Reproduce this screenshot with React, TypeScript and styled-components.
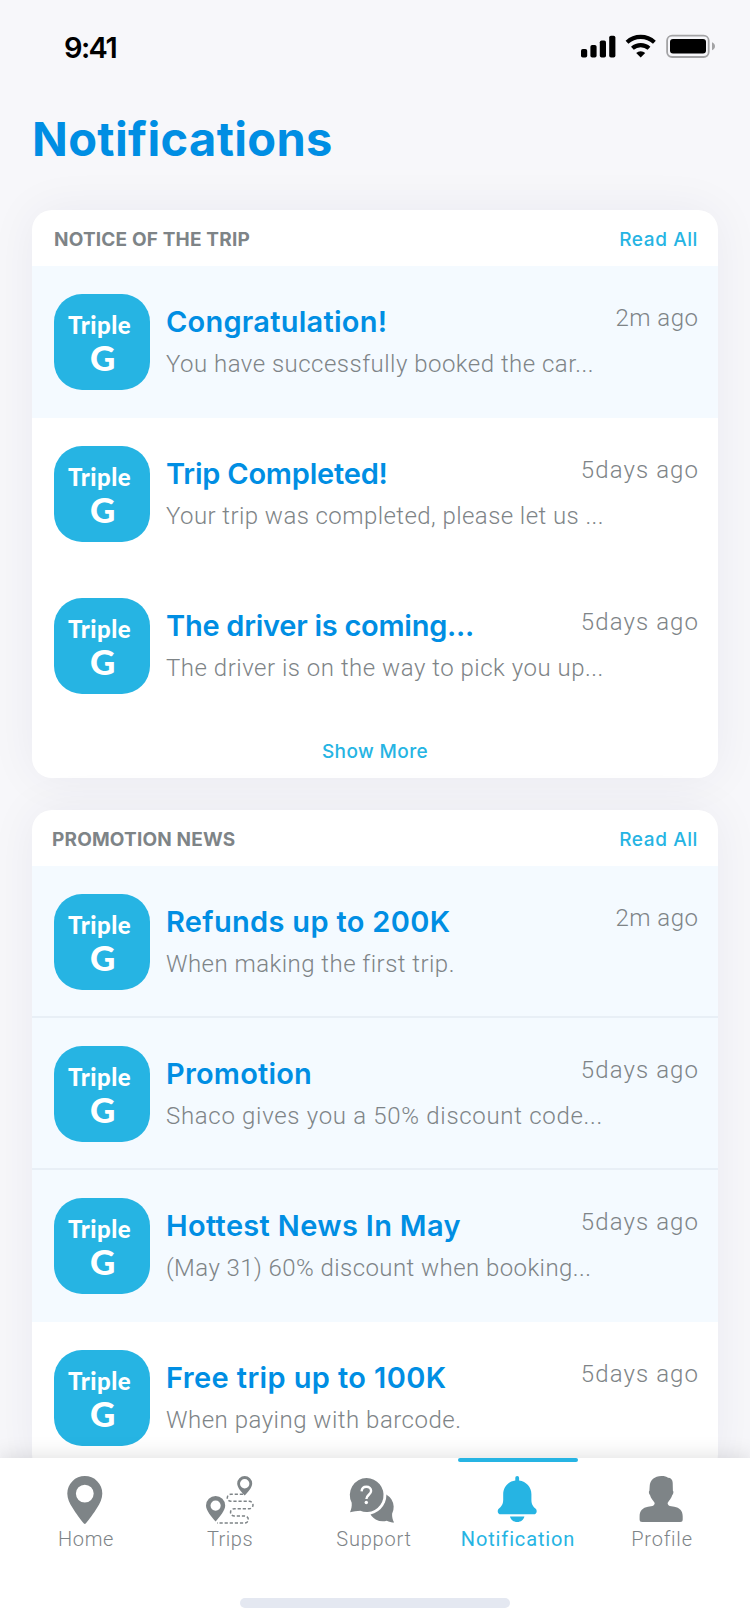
import React from "react";
import styled, { createGlobalStyle } from "styled-components";

const color = {
  page: "#f7f7fa",
  primary: "#008ee3",
  accent: "#26b4e3",
  grey: "#7e8487",
  unread: "#f4faff",
  line: "#e8eff6",
};

const GlobalStyle = createGlobalStyle`
  * { box-sizing: border-box; }
  body { margin: 0; background: ${color.page}; font-family: Inter, sans-serif; }
  h1, h2, h3, p { margin: 0; padding: 0; }
`;

const Screen = styled.div`
  width: 750px;
  height: 1624px;
  display: flex;
  flex-direction: column;
  overflow: hidden;
  background: ${color.page};
`;

const StatusBar = styled.header`
  flex: none;
  height: 94px;
  padding: 0 34px 0 64px;
  display: flex;
  align-items: center;
  justify-content: space-between;
`;

const Clock = styled.time`
  font-size: 29px;
  font-weight: 600;
  letter-spacing: -1.6px;
  line-height: 40px;
  padding-top: 1px;
  color: #000;
`;

const PageTitle = styled.h1`
  flex: none;
  height: 116px;
  padding: 13px 0 0 32px;
  font-size: 47px;
  line-height: 64px;
  font-weight: 700;
  letter-spacing: 0.35px;
  color: ${color.primary};
`;

const Feed = styled.main`
  flex: 1;
  min-height: 0;
  padding: 0 32px;
  display: flex;
  flex-direction: column;
  gap: 32px;
`;

const Card = styled.section`
  flex: none;
  border-radius: 20px;
  background: #fff;
  box-shadow: 0 0 48px rgba(40, 40, 90, 0.06);
`;

const CardHeader = styled.div<{ $inset: number }>`
  height: 56px;
  padding: 2px 20px 0 ${(p) => p.$inset}px;
  display: flex;
  align-items: center;
  justify-content: space-between;
`;

const CardTitle = styled.h2`
  font-size: 19px;
  font-weight: 700;
  letter-spacing: 0.18px;
  color: ${color.grey};
`;

const TextLink = styled.a<{ $strong?: boolean }>`
  font-size: 19px;
  font-weight: ${(p) => (p.$strong ? 550 : 450)};
  letter-spacing: ${(p) => (p.$strong ? 0.4 : 0.6)}px;
  color: ${color.accent};
`;

const CardFooter = styled.div`
  height: 56px;
  padding-top: 2px;
  display: flex;
  align-items: center;
  justify-content: center;
`;

const Row = styled.article<{ $unread?: boolean; $divided?: boolean }>`
  height: 152px;
  padding: 28px 20px 0 22px;
  display: flex;
  gap: 16px;
  background: ${(p) => (p.$unread ? color.unread : "transparent")};
  border-bottom: ${(p) => (p.$divided ? `2px solid ${color.line}` : "none")};
`;

const Logo = styled.div`
  flex: none;
  width: 96px;
  height: 96px;
  padding: 17px 0 0 14px;
  border-radius: 28px;
  background: ${color.accent};
  color: #fff;
  font-family: Lato, sans-serif;
  font-weight: 900;
`;

const LogoName = styled.div`
  font-size: 24px;
  line-height: 28px;
  letter-spacing: 0.5px;
`;

const LogoMark = styled.div`
  padding-left: 22px;
  font-size: 35px;
  line-height: 36px;
`;

const RowText = styled.div`
  flex: 1;
  min-width: 0;
  padding-top: 8px;
`;

const RowTitle = styled.h3<{ $track: number }>`
  font-size: 29px;
  line-height: 40px;
  font-weight: 600;
  letter-spacing: ${(p) => p.$track}px;
  white-space: nowrap;
  color: ${color.primary};
`;

const RowBody = styled.p<{ $track: number }>`
  margin-top: 7px;
  font-family: Roboto, sans-serif;
  font-size: 24px;
  line-height: 30px;
  font-weight: 340;
  letter-spacing: ${(p) => p.$track}px;
  white-space: nowrap;
  color: ${color.grey};
`;

const RowTime = styled.time<{ $track: number }>`
  flex: none;
  height: 30px;
  margin-top: 9px;
  margin-right: ${(p) => -p.$track}px;
  font-family: Roboto, sans-serif;
  font-size: 24px;
  line-height: 30px;
  font-weight: 340;
  letter-spacing: ${(p) => p.$track}px;
  color: ${color.grey};
`;

const TabBar = styled.nav`
  flex: none;
  position: relative;
  height: 166px;
  background: #fff;
  box-shadow: 0 -2px 20px rgba(0, 0, 0, 0.12);
`;

const Tabs = styled.div`
  height: 140px;
  padding: 0 16px 0 14px;
  display: grid;
  grid-template-columns: repeat(5, 144px);
`;

const Tab = styled.div<{ $active?: boolean }>`
  display: flex;
  flex-direction: column;
  align-items: center;
  color: ${(p) => (p.$active ? color.accent : color.grey)};

  &::before {
    content: "";
    width: 120px;
    height: 4px;
    margin-bottom: 14px;
    border-radius: 2px;
    background: ${(p) => (p.$active ? color.accent : "transparent")};
  }
`;

const TabLabel = styled.span<{ $active?: boolean; $track: number }>`
  margin-top: 3px;
  font-family: Roboto, sans-serif;
  font-size: 20px;
  line-height: 24px;
  font-weight: ${(p) => (p.$active ? 450 : 330)};
  letter-spacing: ${(p) => p.$track}px;
`;

const HomeIndicator = styled.div`
  width: 270px;
  height: 10px;
  margin: 0 auto;
  border-radius: 5px;
  background: #e4e8f1;
`;

const Icon = styled.svg`
  display: block;
  width: 48px;
  height: 48px;
  overflow: visible;
`;

const StatusIcons = () => (
  <svg width="136" height="26" viewBox="0 0 136 26">
    <rect x="1" y="15" width="6.2" height="8.6" rx="1.8" />
    <rect x="10.4" y="11" width="6.2" height="12.6" rx="1.8" />
    <rect x="19.8" y="6.4" width="6.2" height="17.2" rx="1.8" />
    <rect x="29.2" y="1.8" width="6.2" height="21.8" rx="1.8" />
    <g fill="none" stroke="#000" strokeWidth="4.2">
      <path d="M47 8.2a20.5 20.5 0 0 1 27.4 0" />
      <path d="M52.4 14.2a12.5 12.5 0 0 1 16.6 0" />
    </g>
    <path d="M60.7 23.6 56.2 19a6.5 6.5 0 0 1 9 0z" />
    <rect x="87.1" y="1.6" width="41.6" height="21.4" rx="5" fill="none" stroke="#a3a3a5" strokeWidth="1.8" />
    <rect x="90" y="5" width="36" height="14.6" rx="3" />
    <path d="M132 8.3c4 1.6 4 6.4 0 8z" fill="#a3a3a5" />
  </svg>
);

const PinIcon = () => (
  <Icon viewBox="1.6 0 48 48" fill="currentColor">
    <path
      fillRule="evenodd"
      d="M24.4 0a17.5 17.5 0 0 1 17.5 17.5c0 5.300-2.400 9.800-5.200 14.300C33.500 37 28.500 44 25.300 47.500q-.9.900-1.800 0C20.300 44 15.300 37 12.100 31.800 9.300 27.300 6.900 22.800 6.900 17.500A17.500 17.500 0 0 1 24.400 0zm0 8.700a8.900 8.900 0 1 0 0 17.800 8.900 8.900 0 0 0 0-17.800z"
    />
  </Icon>
);

const RouteIcon = () => (
  <Icon viewBox="0 0 48 48" fill="currentColor">
    <path
      fillRule="evenodd"
      d="M9.600 20a9.600 9.600 0 0 1 9.600 9.600c0 5-5.600 11.500-9.600 15.900C5.600 41.100 0 34.600 0 29.600A9.600 9.600 0 0 1 9.600 20zm0 4.500a5.100 5.100 0 1 0 0 10.200 5.100 5.100 0 0 0 0-10.200z"
    />
    <path
      fillRule="evenodd"
      d="M38.700 0a7.500 7.500 0 0 1 7.500 7.500c0 4-4.300 8.700-7.500 11.900-3.200-3.200-7.500-7.900-7.500-11.900A7.500 7.500 0 0 1 38.700 0zm0 3a4.700 4.700 0 1 0 0 9.400 4.700 4.700 0 0 0 0-9.400z"
    />
    <path
      d="M37 18.300H24.800a3.500 3.500 0 0 0 0 7h18.500a3.700 3.700 0 0 1 0 7.400H28.200a3.600 3.600 0 0 0 0 7.300h10.600a3.500 3.500 0 0 1 0 7H11"
      fill="none"
      stroke="currentColor"
      strokeWidth="1.5"
      strokeDasharray="3.2 1.9"
    />
  </Icon>
);

const SupportIcon = () => (
  <Icon viewBox="1.4 0 48 48" fill="currentColor">
    <path d="M30.500 16.600a14.600 14.600 0 0 1 13 21.200c-.2 3 .5 6 2 8.800-2.500 0-5-.6-7.300-1.800A14.600 14.600 0 1 1 30.500 16.600z" />
    <circle cx="18" cy="19" r="19.8" fill="#fff" />
    <path d="M18 2a17 17 0 1 1-6.300 32.800c-2.800.2-7.400.8-10.300 1.400 1.300-2.600 2-5.700 1.700-9.400A17 17 0 0 1 18 2z" />
    <path
      d="M13 15.300c.2-3 2.200-4.500 4.800-4.500 2.700 0 4.700 1.700 4.700 4.200 0 3.600-4.700 4-4.700 8"
      fill="none"
      stroke="#fff"
      strokeWidth="2.4"
    />
    <circle cx="17.7" cy="26.5" r="1.7" fill="#fff" />
  </Icon>
);

const BellIcon = () => (
  <Icon viewBox="0 0 48 48" fill="currentColor">
    <path d="M21.300 4.500V1.700q0-1.700 1.900-1.700t1.900 1.700v2.800c7.200 1 12.300 6.600 12.300 13.700v5.500c0 4.800 1.900 6.900 4.300 9.100 2 2 .8 5.500-2.200 5.500H6.900c-3 0-4.200-3.500-2.200-5.500 2.400-2.200 4.500-4.300 4.500-9.100v-5.500c0-7.100 4.900-12.700 12.100-13.700z" />
    <path d="M16 40.500h14.400c-.8 3.300-3.500 5.500-7.200 5.500s-6.400-2.200-7.200-5.500z" />
  </Icon>
);

const ProfileIcon = () => (
  <Icon viewBox="0.8 0 48 48" fill="currentColor">
    <path d="M24.300 0c3 0 5.200.6 6.500 1.800 3 0 4.600 2 4.700 5l.2 8c.9.500.6 3-.6 4.300-.9 3.400-3.100 5.300-4.700 7.900.1 1.500.7 2.500 2.200 2.900l4.500.8c5.200.9 8.400 4 8.400 9.500v3.300q0 2.500-2.500 2.500H4.900q-2.500 0-2.500-2.500v-3.300c0-5.500 3.200-8.600 8.400-9.500l4.500-.8c1.500-.4 2.100-1.400 2.200-2.900-1.600-2.600-4-4.500-4.700-7.900-1.200-1.300-1.500-3.800-.6-4.300l.3-4.800C12.800 4.300 17.300 0 24.300 0z" />
  </Icon>
);

type Notice = {
  title: string;
  titleTrack: number;
  body: string;
  bodyTrack: number;
  time: string;
  unread?: boolean;
  divided?: boolean;
};

const tripNotices: Notice[] = [
  { title: "Congratulation!", titleTrack: 0.24, body: "You have successfully booked the car...", bodyTrack: 0.48, time: "2m ago", unread: true },
  { title: "Trip Completed!", titleTrack: -0.21, body: "Your trip was completed, please let us ...", bodyTrack: 0.43, time: "5days ago" },
  { title: "The driver is coming...", titleTrack: -0.26, body: "The driver is on the way to pick you up...", bodyTrack: 0.51, time: "5days ago" },
];

const promotions: Notice[] = [
  { title: "Refunds up to 200K", titleTrack: 0.32, body: "When making the first trip.", bodyTrack: 0.46, time: "2m ago", unread: true, divided: true },
  { title: "Promotion", titleTrack: 0.2, body: "Shaco gives you a 50% discount code...", bodyTrack: 0.69, time: "5days ago", unread: true, divided: true },
  { title: "Hottest News In May", titleTrack: 0.33, body: "(May 31) 60% discount when booking...", bodyTrack: 0.43, time: "5days ago", unread: true },
  { title: "Free trip up to 100K", titleTrack: 0.38, body: "When paying with barcode.", bodyTrack: 0.5, time: "5days ago" },
];

const NoticeRow = ({ notice }: { notice: Notice }) => (
  <Row $unread={notice.unread} $divided={notice.divided}>
    <Logo>
      <LogoName>Triple</LogoName>
      <LogoMark>G</LogoMark>
    </Logo>
    <RowText>
      <RowTitle $track={notice.titleTrack}>{notice.title}</RowTitle>
      <RowBody $track={notice.bodyTrack}>{notice.body}</RowBody>
    </RowText>
    <RowTime $track={notice.time.startsWith("2m") ? 0.5 : 1.1}>{notice.time}</RowTime>
  </Row>
);

const tabs = [
  { label: "Home", icon: <PinIcon />, track: 0.6 },
  { label: "Trips", icon: <RouteIcon />, track: 0.5 },
  { label: "Support", icon: <SupportIcon />, track: 0.8 },
  { label: "Notification", icon: <BellIcon />, track: 0.85, active: true },
  { label: "Profile", icon: <ProfileIcon />, track: 0.8 },
];

export default function App() {
  return (
    <Screen>
      <GlobalStyle />
      <StatusBar>
        <Clock>9:41</Clock>
        <StatusIcons />
      </StatusBar>
      <PageTitle>Notifications</PageTitle>
      <Feed>
        <Card>
          <CardHeader $inset={22}>
            <CardTitle>NOTICE OF THE TRIP</CardTitle>
            <TextLink>Read All</TextLink>
          </CardHeader>
          {tripNotices.map((n) => (
            <NoticeRow key={n.title} notice={n} />
          ))}
          <CardFooter>
            <TextLink $strong>Show More</TextLink>
          </CardFooter>
        </Card>
        <Card>
          <CardHeader $inset={20}>
            <CardTitle>PROMOTION NEWS</CardTitle>
            <TextLink>Read All</TextLink>
          </CardHeader>
          {promotions.map((n) => (
            <NoticeRow key={n.title} notice={n} />
          ))}
        </Card>
      </Feed>
      <TabBar>
        <Tabs>
          {tabs.map((t) => (
            <Tab key={t.label} $active={t.active}>
              {t.icon}
              <TabLabel $active={t.active} $track={t.track}>
                {t.label}
              </TabLabel>
            </Tab>
          ))}
        </Tabs>
        <HomeIndicator />
      </TabBar>
    </Screen>
  );
}
